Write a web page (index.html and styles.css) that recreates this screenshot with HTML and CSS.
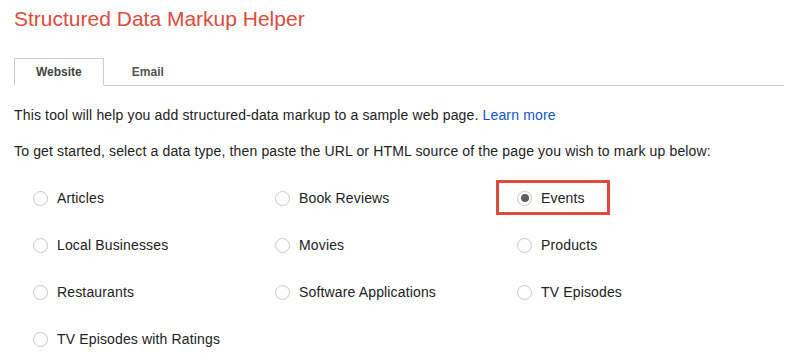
FILE: index.html
```html
<!DOCTYPE html>
<html lang="en">
<head>
    <meta charset="UTF-8">
    <meta name="viewport" content="width=device-width, initial-scale=1.0">
    <title>Structured Data Markup Helper</title>
    <link rel="stylesheet" href="styles.css">
</head>
<body>
    <div class="page">
        <h1 class="title">Structured Data Markup Helper</h1>

        <!-- Tabs -->
        <div class="tabs">
            <div class="tab active">Website</div>
            <div class="tab">Email</div>
        </div>

        <p class="intro">This tool will help you add structured-data markup to a sample web page. <a href="#">Learn more</a></p>
        <p class="intro second">To get started, select a data type, then paste the URL or HTML source of the page you wish to mark up below:</p>

        <!-- Data types -->
        <div class="types">
            <label class="type"><span class="radio"></span>Articles</label>
            <label class="type"><span class="radio"></span>Book Reviews</label>
            <label class="type highlight"><span class="radio checked"></span>Events</label>

            <label class="type"><span class="radio"></span>Local Businesses</label>
            <label class="type"><span class="radio"></span>Movies</label>
            <label class="type"><span class="radio"></span>Products</label>

            <label class="type"><span class="radio"></span>Restaurants</label>
            <label class="type"><span class="radio"></span>Software Applications</label>
            <label class="type"><span class="radio"></span>TV Episodes</label>

            <label class="type"><span class="radio"></span>TV Episodes with Ratings</label>
        </div>
    </div>
</body>
</html>
```

FILE: styles.css
```css
* {
    margin: 0;
    padding: 0;
    box-sizing: border-box;
}

body {
    font-family: 'Liberation Sans', Arial, sans-serif;
    background: #fff;
    color: #222;
}

.page {
    padding: 7px 7px 0 14px;
}

.title {
    font-size: 21px;
    font-weight: normal;
    line-height: 24px;
    color: #dd4b39;
}

/* Tabs */
.tabs {
    display: flex;
    margin-top: 27px;
    border-bottom: 1px solid #ccc;
}

.tab {
    height: 28px;
    line-height: 26px;
    padding: 0 21px;
    margin-bottom: -1px;
    font-size: 12px;
    font-weight: bold;
    color: #555;
    border: 1px solid transparent;
}

.tab.active {
    border-color: #ccc;
    border-bottom-color: #fff;
    background: #fff;
    color: #444;
}

.tab + .tab {
    margin-left: 6px;
}

/* Intro text */
.intro {
    font-size: 14px;
    line-height: 20px;
    letter-spacing: 0.15px;
    margin-top: 19px;
}

.intro.second {
    margin-top: 16px;
}

.intro a {
    color: #15c;
    text-decoration: none;
}

/* Data type grid */
.types {
    display: grid;
    grid-template-columns: 242px 242px 242px;
    grid-auto-rows: 47px;
    margin-top: 13px;
    padding-left: 19px;
}

.type {
    display: flex;
    align-items: center;
    gap: 9px;
    font-size: 14px;
    letter-spacing: 0.15px;
    cursor: pointer;
}

.radio {
    width: 15px;
    height: 15px;
    border: 1px solid #c8c8c8;
    border-radius: 50%;
    display: flex;
    align-items: center;
    justify-content: center;
    flex-shrink: 0;
    margin-top: 1px;
}

.radio.checked::before {
    content: '';
    width: 8px;
    height: 8px;
    border-radius: 50%;
    background: #5f5f5f;
}

.type.highlight {
    position: relative;
    justify-self: start;
}

.type.highlight::after {
    content: '';
    position: absolute;
    left: -21px;
    right: -25px;
    top: 6px;
    bottom: 6px;
    border: 3px solid #dd4b39;
}
```
